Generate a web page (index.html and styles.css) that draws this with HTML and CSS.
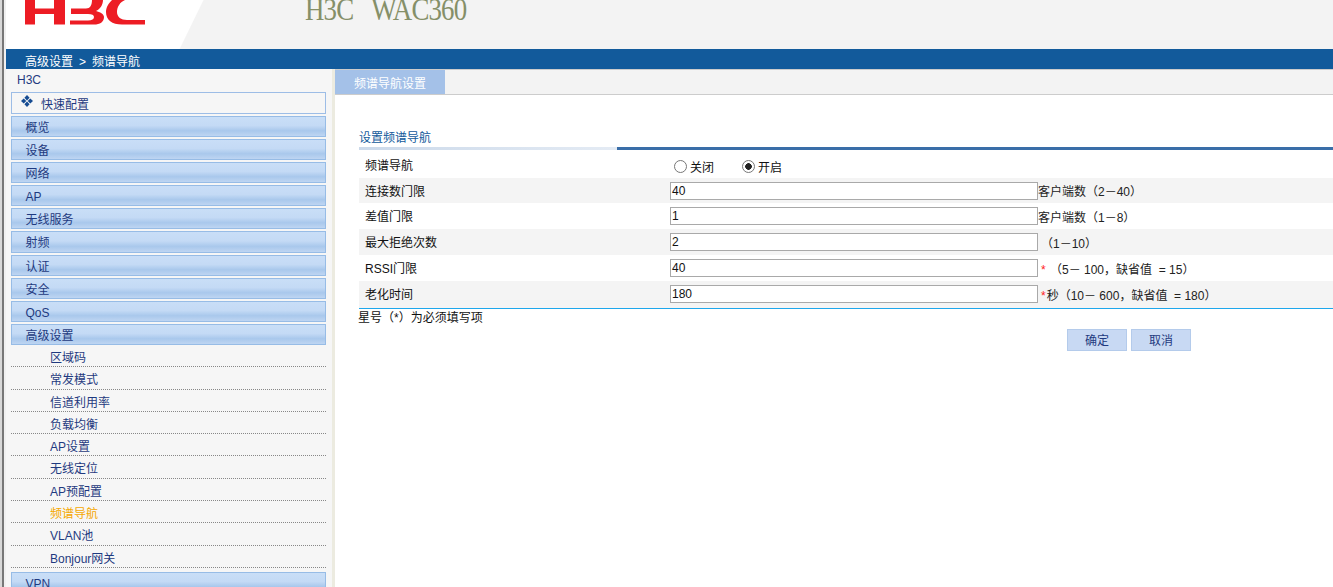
FILE: index.html
```html
<!DOCTYPE html>
<html lang="zh">
<head>
<meta charset="utf-8">
<title>H3C WAC360</title>
<link rel="stylesheet" href="styles.css">
</head>
<body>
<div class="page">
  <div class="edge"></div>
  <div class="main">
    <header class="header">
      <svg class="logo" width="122" height="25" viewBox="0 0 122 25" aria-label="H3C">
        <path fill="#ed1c24" d="M0 0H10V8.5H29V0H40V24.5H29V14H10V24.5H0Z"/>
        <path fill="#ed1c24" d="M67 0H78C78 5 75 9 71 11C75 12 79 14 79 17C79 22 75 24.5 69 24.5H45V20.5H63C67 20.5 69 19 69 17C69 15 67 14 63 14H46V8.5H61C65 8.5 67 5 67 0Z"/>
        <path fill="#ed1c24" d="M120 24.5H97C87 24.5 81 20 81 12C81 7 84 3 87 0H100C95 2 92 7 92 12C92 17 96 20 102 20H120Z"/>
      </svg>
      <div class="product">H3C WAC360</div>
    </header>
    <div class="crumbs"><span>高级设置</span><span class="sep">&gt;</span><span>频谱导航</span></div>
    <div class="body">
      <aside class="side">
        <div class="root">H3C</div>
        <div class="quick">
          <svg class="diamond" width="12" height="12" viewBox="0 0 12 12" aria-hidden="true">
            <path fill="#174c92" d="M6 0L8.6 2.8L6 5.4L3.4 2.8ZM2.7 3.4L5.3 6L2.7 8.6L0 6ZM9.3 3.4L12 6L9.3 8.6L6.7 6ZM6 6.6L8.6 9.2L6 12L3.4 9.2Z"/>
          </svg>
          <span>快速配置</span>
        </div>
        <nav class="menu">
          <div class="mi">概览</div>
          <div class="mi">设备</div>
          <div class="mi">网络</div>
          <div class="mi">AP</div>
          <div class="mi">无线服务</div>
          <div class="mi">射频</div>
          <div class="mi">认证</div>
          <div class="mi">安全</div>
          <div class="mi">QoS</div>
          <div class="mi">高级设置</div>
          <div class="sub">
            <div class="si">区域码</div>
            <div class="si">常发模式</div>
            <div class="si">信道利用率</div>
            <div class="si">负载均衡</div>
            <div class="si">AP设置</div>
            <div class="si">无线定位</div>
            <div class="si">AP预配置</div>
            <div class="si on">频谱导航</div>
            <div class="si">VLAN池</div>
            <div class="si">Bonjour网关</div>
          </div>
          <div class="mi">VPN</div>
        </nav>
      </aside>
      <main class="content">
        <div class="tabs"><div class="tab">频谱导航设置</div></div>
        <section class="panel">
          <h2 class="title">设置频谱导航</h2>
          <div class="rule"><i></i><b></b></div>
          <div class="row first">
            <div class="lab">频谱导航</div>
            <div class="radios">
              <span class="radio"></span><span class="rtext">关闭</span>
              <span class="radio sel"></span><span class="rtext">开启</span>
            </div>
          </div>
          <div class="row alt short">
            <div class="lab">连接数门限</div>
            <div class="val">40</div><div class="hint">客户端数（2－40）</div>
          </div>
          <div class="row">
            <div class="lab">差值门限</div>
            <div class="val">1</div><div class="hint">客户端数（1－8）</div>
          </div>
          <div class="row alt">
            <div class="lab">最大拒绝次数</div>
            <div class="val">2</div><div class="hint pad">（1－10）</div>
          </div>
          <div class="row">
            <div class="lab">RSSI门限</div>
            <div class="val">40</div><div class="hint pad"><em>*</em>&nbsp;（5－ 100，缺省值&nbsp; = 15）</div>
          </div>
          <div class="row alt last">
            <div class="lab">老化时间</div>
            <div class="val">180</div><div class="hint pad"><em>*</em>秒（10－ 600，缺省值&nbsp; = 180）</div>
          </div>
          <div class="note">星号（*）为必须填写项</div>
          <div class="btns"><div class="btn">确定</div><div class="btn">取消</div></div>
        </section>
      </main>
    </div>
  </div>
</div>
</body>
</html>
```
FILE: styles.css
```css
* { box-sizing: border-box; }
html, body { margin: 0; padding: 0; height: 100%; overflow: hidden; background: #fff; }
body { font: 12px "Liberation Sans", "Noto Sans CJK SC", sans-serif; color: #111; }
.page { display: flex; width: 1333px; height: 587px; overflow: hidden; }
.edge { width: 6px; flex: none; background: linear-gradient(90deg, #d8d8d8 0 2px, #777 2px 4px, #f0f0f0 4px); }
.main { flex: 1; display: flex; flex-direction: column; min-width: 0; }
.header { height: 49px; flex: none; background: linear-gradient(116deg, #fff 0 177px, #f3f3f3 178px); display: flex; overflow: hidden; }
.logo { margin-left: 19px; flex: none; display: block; }
.product { margin-left: 158px; margin-top: -10px; font: 32px/38px "Liberation Serif", serif; letter-spacing: -1px; word-spacing: 15px; transform: scaleX(0.84); transform-origin: left top; color: #858f68; white-space: nowrap; height: 38px; }
.crumbs { height: 20px; flex: none; background: #125a9b; color: #fff; display: flex; align-items: flex-end; padding-left: 19px; font-size: 12px; line-height: 14px; }
.crumbs .sep { margin: 0 6px; }
.body { flex: 1; display: flex; min-height: 0; }
.side { width: 329px; flex: none; background: #f6f6f6; border-right: 3px solid #ecebe0; padding: 0 6px 0 5px; overflow: hidden; }
.root { height: 23px; line-height: 22px; padding-left: 6px; color: #1f3a80; }
.quick { height: 22px; border: 1px solid #9dbde6; background: #f6f6f6; display: flex; align-items: center; color: #1f3a80; padding-left: 9px; }
.diamond { margin: -4px 8px 0 0; flex: none; }
.menu { margin-top: 2px; display: flex; flex-direction: column; gap: 2px; }
.mi { height: 21.1px; flex: none; border: 1px solid #97bce6; background: linear-gradient(180deg, #c9def7 0, #c4daf5 45%, #a9c8ec 72%, #bed5f2 100%); padding-left: 13.5px; line-height: 21px; padding-top: 1px; color: #1f3a80; }
.sub { margin-top: -2px; display: flex; flex-direction: column; }
.si { height: 22.3px; flex: none; border-bottom: 1px dotted #888; padding: 4px 0 0 39px; line-height: 19px; color: #1f3a80; }
.si.on { color: #f5a800; }
.sub + .mi { margin-top: 2px; }
.content { flex: 1; min-width: 0; }
.tabs { height: 26px; background: #f3f3f3; border-top: 1px solid #ccc; border-bottom: 1px solid #ccc; }
.tab { width: 110px; height: 24px; background: #a4c1e8; color: #fff; text-align: center; padding-top: 2px; line-height: 24px; }
.panel { padding: 36px 0 0 24px; }
.title { margin: 0; height: 16px; font-size: 12px; font-weight: 400; line-height: 14px; color: #125a9b; }
.rule { height: 3px; display: flex; }
.rule i { width: 258px; background: linear-gradient(90deg, #cbd9ea, #e4ebf4); }
.rule b { flex: 1; background: #3a6ea8; }
.row { height: 26px; display: flex; align-items: center; }
.row.first { height: 28px; }
.row.short { height: 25px; }
.row.alt { background: #f4f4f4; }
.row.last { border-bottom: 1px solid #1ea7ec; height: 28px; padding-bottom: 1px; }
.lab { width: 311px; padding: 0 0 1px 6px; flex: none; }
.first .lab { padding-bottom: 0; }
.val { width: 368px; height: 18px; flex: none; background: #fff; border: 1px solid #a9a9a9; line-height: 16px; padding-left: 1px; }
.hint { white-space: nowrap; color: #222; }
.hint.pad { padding-left: 3px; }
.hint em { font-style: normal; color: #f22; padding-right: 1px; }
.radios { display: flex; align-items: center; margin-top: 5px; padding-left: 4px; }
.radio { width: 13px; height: 13px; border: 1px solid #777; border-radius: 50%; background: #fff; flex: none; margin-right: 3px; }
.radio.sel { background: radial-gradient(circle, #222 0 3px, #fff 3.6px); }
.rtext { margin-right: 28px; }
.note { line-height: 18px; height: 20px; margin-left: -1px; }
.btns { display: flex; gap: 4px; margin-left: 708px; }
.btn { width: 60px; height: 22px; background: #c8d9f3; border: 1px solid #b4cbeb; color: #1f3a80; text-align: center; line-height: 22px; }
```
